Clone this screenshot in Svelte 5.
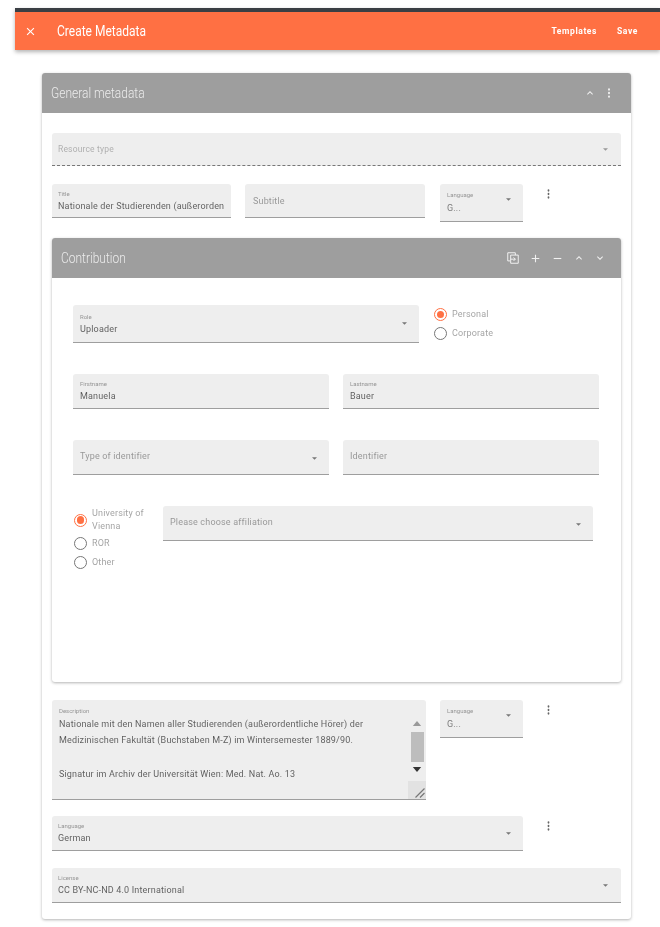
<script lang="ts">
  const dots = "M12 8a2 2 0 1 0 0-4 2 2 0 0 0 0 4zm0 2a2 2 0 1 0 0 4 2 2 0 0 0 0-4zm0 6a2 2 0 1 0 0 4 2 2 0 0 0 0-4z";
  const up = "M7.4 15.4 12 10.8l4.6 4.6L18 14l-6-6-6 6z";
  const down = "M7.4 8.6 12 13.2l4.6-4.6L18 10l-6 6-6-6z";
</script>

{#snippet arrow()}
  <svg class="arrow" viewBox="0 0 10 5"><path d="M0 0h10L5 5z" /></svg>
{/snippet}

{#snippet more()}
  <svg class="more" viewBox="0 0 24 24" preserveAspectRatio="none"><path d={dots} /></svg>
{/snippet}

{#snippet radio(label, checked = false)}
  <div class="radio">
    <span class="ring" class:checked></span>
    <span class="radio-label">{label}</span>
  </div>
{/snippet}

{#snippet field(cls, label, value = "", hasArrow = false)}
  <div class="field {cls}">
    {#if value}
      <div class="text">
        <span class="small">{label}</span>
        <span class="value">{value}</span>
      </div>
    {:else}
      <span class="placeholder">{label}</span>
    {/if}
    {#if hasArrow}{@render arrow()}{/if}
  </div>
{/snippet}

<div class="page">
  <header class="toolbar">
    <svg class="close" viewBox="0 0 24 24"><path d="M19 6.4 17.6 5 12 10.6 6.4 5 5 6.4 10.6 12 5 17.6 6.4 19 12 13.4 17.6 19 19 17.6 13.4 12z" /></svg>
    <span class="title">Create Metadata</span>
    <span class="spacer"></span>
    <span class="action">Templates</span>
    <span class="action">Save</span>
  </header>

  <main class="card outer">
    <div class="card-head outer-head">
      <span class="head-title">General metadata</span>
      <span class="spacer"></span>
      <svg class="icon" viewBox="0 0 24 24"><path d={up} /></svg>
      <svg class="icon head-dots" viewBox="0 0 24 24"><path d={dots} /></svg>
    </div>

    <div class="outer-body">
      <div class="field resource">
        <span class="placeholder">Resource type</span>
        {@render arrow()}
      </div>

      <div class="row title-row">
        {@render field("f-title", "Title", "Nationale der Studierenden (außerorden")}
        {@render field("f-subtitle", "Subtitle")}
        {@render field("f-lang", "Language", "G...", true)}
        {@render more()}
      </div>

      <section class="card inner">
        <div class="card-head inner-head">
          <span class="head-title">Contribution</span>
          <span class="spacer"></span>
          <svg class="icon copy" viewBox="0 0 24 24" fill="none" stroke="currentColor" stroke-width="1.7">
            <path d="M7 17H3V3h13v4" />
            <path d="M8 7h13v14H8z" />
            <path d="M8 14h8M13 11l3 3-3 3" />
          </svg>
          <svg class="icon plus" viewBox="0 0 24 24"><path d="M19 13h-6v6h-2v-6H5v-2h6V5h2v6h6z" /></svg>
          <svg class="icon plus" viewBox="0 0 24 24"><path d="M19 13H5v-2h14z" /></svg>
          <svg class="icon" viewBox="0 0 24 24"><path d={up} /></svg>
          <svg class="icon" viewBox="0 0 24 24"><path d={down} /></svg>
        </div>

        <div class="inner-body">
          <div class="row role-row">
            {@render field("f-role", "Role", "Uploader", true)}
            <div class="radios">
              {@render radio("Personal", true)}
              {@render radio("Corporate")}
            </div>
          </div>

          <div class="row name-row">
            {@render field("f-half", "Firstname", "Manuela")}
            {@render field("f-half", "Lastname", "Bauer")}
          </div>

          <div class="row id-row">
            {@render field("f-half f-id", "Type of identifier", "", true)}
            {@render field("f-half f-id", "Identifier")}
          </div>

          <div class="row aff-row">
            <div class="radios aff-radios">
              {@render radio("University of Vienna", true)}
              {@render radio("ROR")}
              {@render radio("Other")}
            </div>
            {@render field("f-aff", "Please choose affiliation", "", true)}
          </div>
        </div>
      </section>

      <div class="row desc-row">
        <div class="field f-desc">
          <div class="desc-text">
            <span class="small">Description</span>
            <p>Nationale mit den Namen aller Studierenden (außerordentliche Hörer) der<br />Medizinischen Fakultät (Buchstaben M-Z) im Wintersemester 1889/90.<br /><br />Signatur im Archiv der Universität Wien: Med. Nat. Ao. 13</p>
          </div>
          <div class="scrollbar">
            <svg class="sb-arrow light" viewBox="0 0 10 6"><path d="M5 0l5 6H0z" /></svg>
            <div class="thumb"></div>
            <svg class="sb-arrow" viewBox="0 0 10 6"><path d="M0 0h10L5 6z" /></svg>
            <div class="grip">
              <svg viewBox="0 0 12 12" fill="none" stroke="#777" stroke-width="0.8"><path d="M11 5 5 11M11 8l-3 3" /></svg>
            </div>
          </div>
        </div>
        {@render field("f-lang", "Language", "G...", true)}
        {@render more()}
      </div>

      <div class="row lang-row">
        {@render field("f-language", "Language", "German", true)}
        {@render more()}
      </div>

      {@render field("f-license", "License", "CC BY-NC-ND 4.0 International", true)}
    </div>
  </main>
</div>

<style>
  :global(body) {
    margin: 0;
    background: #fff;
  }

  .page {
    width: 660px;
    height: 927px;
    overflow: hidden;
    box-sizing: border-box;
    padding: 8px 0 0 15px;
    font-family: Roboto, "Liberation Sans", sans-serif;
    color: rgba(0, 0, 0, 0.62);
    filter: blur(0.55px);
  }

  .spacer {
    flex: 1;
  }

  .toolbar {
    display: flex;
    align-items: center;
    height: 38px;
    border-top: 4px solid #3a3f44;
    background: #ff7043;
    color: #fff;
    box-shadow: 0 2px 4px rgba(0, 0, 0, 0.3);
  }

  .close {
    width: 13px;
    height: 13px;
    margin-left: 9px;
    fill: #fff;
  }

  .title {
    margin-left: 20px;
    font-size: 12px;
    display: inline-block;
    transform: scaleY(1.15);
    transform-origin: left center;
  }

  .action {
    font-size: 8.5px;
    font-weight: 700;
    letter-spacing: 0.6px;
    margin-right: 20px;
  }

  .action:last-child {
    margin-right: 22px;
  }

  .card {
    background: #fff;
    border-radius: 3px;
    box-shadow: 0 1px 3px rgba(0, 0, 0, 0.3);
  }

  .outer {
    width: 589px;
    height: 846px;
    margin: 23px 0 0 27px;
  }

  .card-head {
    display: flex;
    align-items: center;
    height: 40px;
    background: #9e9e9e;
    color: rgba(255, 255, 255, 0.8);
    border-radius: 3px 3px 0 0;
  }

  .outer-head {
    padding: 0 16px 0 9px;
  }

  .inner-head {
    padding: 0 15px 0 9px;
  }

  .head-title {
    font-size: 12px;
    font-weight: 300;
    display: inline-block;
    transform: scaleY(1.15);
    transform-origin: left center;
  }

  .icon {
    width: 12px;
    height: 12px;
    margin-left: 9px;
    fill: rgba(255, 255, 255, 0.85);
    color: rgba(255, 255, 255, 0.85);
  }

  .outer-head .head-dots {
    margin-left: 7px;
    transform: scaleY(1.2);
  }

  .copy {
    width: 14px;
    height: 14px;
    fill: none;
  }

  .plus {
    width: 13px;
    height: 13px;
  }

  .outer-body {
    padding: 20px 10px 0;
  }

  .row {
    display: flex;
    align-items: flex-start;
  }

  .field {
    display: flex;
    align-items: center;
    box-sizing: border-box;
    padding: 0 6px;
    background: #eee;
    border-bottom: 1.5px solid #9e9e9e;
    border-radius: 3px 3px 0 0;
    flex: none;
  }

  .text {
    display: flex;
    flex-direction: column;
    flex: 1;
    min-width: 0;
    gap: 2px;
  }

  .small {
    font-size: 6px;
    line-height: 8px;
    color: rgba(0, 0, 0, 0.4);
  }

  .value {
    font-size: 9px;
    line-height: 12px;
    letter-spacing: 0.17px;
    white-space: nowrap;
    overflow: hidden;
  }

  .placeholder {
    flex: 1;
    font-size: 9px;
    letter-spacing: 0.17px;
    margin-top: -2px;
    color: rgba(0, 0, 0, 0.38);
  }

  .arrow {
    width: 5px;
    height: 3px;
    fill: #777;
    flex: none;
  }

  .more {
    width: 11px;
    height: 14px;
    fill: #666;
    flex: none;
    margin: 3px 0 0 20px;
  }

  .resource {
    height: 33px;
    border-bottom: 1px dashed #777;
    padding: 0 13px 0 6px;
  }

  .resource .placeholder {
    font-size: 8.5px;
    color: rgba(0, 0, 0, 0.28);
    margin-top: 0;
  }

  .resource .arrow {
    fill: #999;
  }

  .title-row {
    margin-top: 18px;
  }

  .f-title {
    width: 179px;
    height: 34px;
    padding: 1px 4px 0 6px;
  }

  .f-subtitle {
    width: 180px;
    height: 34px;
    margin-left: 14px;
    padding-left: 8px;
  }

  .f-subtitle .placeholder {
    margin-top: 0;
  }

  .f-lang {
    width: 83px;
    height: 38px;
    margin-left: 15px;
    padding: 0 12px 0 7px;
  }

  .f-lang .value {
    color: rgba(0, 0, 0, 0.5);
  }

  .f-lang .text {
    gap: 3px;
  }

  .f-lang .arrow {
    margin-top: -6px;
  }

  .inner {
    margin-top: 16px;
    height: 444px;
  }

  .inner-body {
    padding: 27px 22px 0 21px;
  }

  .inner-body .field {
    padding-left: 7px;
  }

  .f-role {
    width: 346px;
    height: 38px;
    padding-right: 12px;
  }

  .radios {
    display: flex;
    flex-direction: column;
    gap: 6px;
    margin: 3px 0 0 15px;
  }

  .radio {
    display: flex;
    align-items: center;
    gap: 5px;
    min-height: 13px;
  }

  .ring {
    width: 13px;
    height: 13px;
    box-sizing: border-box;
    border: 1.3px solid #777;
    border-radius: 50%;
    flex: none;
    position: relative;
  }

  .ring.checked {
    border-color: #ff7043;
  }

  .ring.checked::after {
    content: "";
    position: absolute;
    inset: 1.8px;
    border-radius: 50%;
    background: #ff7043;
  }

  .radio-label {
    font-size: 9px;
    line-height: 13px;
    letter-spacing: 0.17px;
    color: rgba(0, 0, 0, 0.38);
  }

  .name-row {
    margin-top: 31px;
    gap: 14px;
  }

  .id-row {
    margin-top: 31px;
    gap: 14px;
  }

  .f-half {
    width: 256px;
    height: 35px;
  }

  .f-id {
    padding-right: 12px;
  }

  .f-id .arrow {
    margin-top: 2px;
  }

  .aff-row {
    margin-top: 31px;
  }

  .aff-radios {
    width: 72px;
    margin: 1px 0 0 1px;
    flex: none;
    gap: 6px;
  }

  .aff-radios .radio:first-child {
    margin-bottom: -2px;
  }

  .f-aff {
    width: 430px;
    height: 35px;
    margin-left: 17px;
    padding-right: 12px;
  }

  .f-aff .arrow {
    margin-top: 2px;
  }

  .desc-row {
    margin-top: 18px;
  }

  .desc-row .f-lang {
    margin-left: 14px;
  }

  .f-desc {
    width: 374px;
    height: 100px;
    padding: 0;
    align-items: stretch;
    overflow: hidden;
  }

  .desc-text {
    flex: 1;
    padding: 7px 0 0 7px;
    min-width: 0;
  }

  .desc-text .small {
    display: block;
    margin-bottom: 0.5px;
  }

  .desc-text p {
    margin: 0;
    font-size: 9px;
    line-height: 16.8px;
    letter-spacing: 0.17px;
    white-space: nowrap;
  }

  .scrollbar {
    width: 18px;
    display: flex;
    flex-direction: column;
    align-items: center;
    padding-top: 21px;
  }

  .sb-arrow {
    width: 10px;
    height: 5px;
    fill: #333;
  }

  .sb-arrow.light {
    fill: #999;
  }

  .thumb {
    width: 13px;
    height: 30px;
    margin: 6px 0 5px;
    background: #bdbdbd;
  }

  .grip {
    width: 18px;
    height: 18px;
    margin-top: auto;
    background: #e2e2e2;
  }

  .grip svg {
    display: block;
    width: 18px;
    height: 18px;
  }

  .lang-row {
    margin-top: 16px;
  }

  .f-language {
    width: 471px;
    height: 35px;
    padding-right: 12px;
  }

  .f-license {
    width: 569px;
    height: 35px;
    margin-top: 17px;
    padding-right: 13px;
  }
</style>
